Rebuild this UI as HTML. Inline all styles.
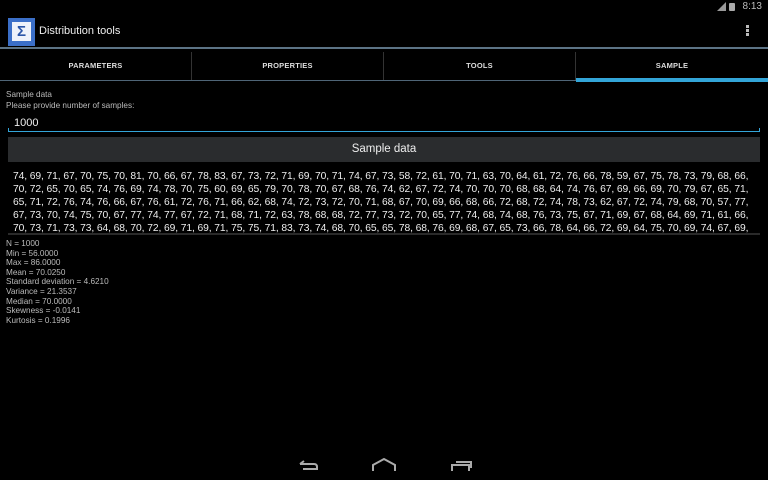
<!DOCTYPE html>
<html><head><meta charset="utf-8"><style>
*{margin:0;padding:0;box-sizing:border-box}
body{width:768px;height:480px;background:#000;color:#fff;font-family:"Liberation Sans",sans-serif;position:relative;overflow:hidden}
.abs{position:absolute}
.tab{position:absolute;top:49px;height:32px;font-size:7.5px;font-weight:bold;color:#ddd;text-align:center;line-height:33px;letter-spacing:.2px}
.data{left:13px;top:170px;font-size:10.3px;line-height:13px;white-space:nowrap;color:#eee;letter-spacing:-0.1px}
.stats{left:6px;top:239px;font-size:8.2px;line-height:9.6px;color:#bbb}
</style></head><body>
<div class="abs" style="right:6px;top:1px;font-size:10px;color:#bbb">8:13</div>
<div class="abs" style="right:33px;top:3px;width:6px;height:8px;background:#aaa;border-radius:1px"></div>
<div class="abs" style="right:42px;top:2px;width:0;height:0;border-left:9px solid transparent;border-bottom:9px solid #999"></div>
<div class="abs" style="left:8px;top:18px;width:27px;height:28px;background:#3b6fc8"></div>
<div class="abs" style="left:12px;top:22px;width:19px;height:19px;background:#eef2fa;color:#2b56a8;font-size:15px;font-weight:bold;text-align:center;line-height:19px">Σ</div>
<div class="abs" style="left:39px;top:25px;font-size:11px;color:#eee">Distribution tools</div>
<div class="abs" style="left:746px;top:25px;width:3px;height:3px;background:#bbb;box-shadow:0 4px 0 #bbb,0 8px 0 #bbb"></div>
<div class="abs" style="left:0;top:47px;width:768px;height:2px;background:#5c7385"></div>
<div class="tab" style="left:0;width:191px">PARAMETERS</div>
<div class="tab" style="left:192px;width:191px">PROPERTIES</div>
<div class="tab" style="left:384px;width:191px">TOOLS</div>
<div class="tab" style="left:576px;width:192px">SAMPLE</div>
<div class="abs" style="left:191px;top:52px;width:1px;height:28px;background:#333"></div>
<div class="abs" style="left:383px;top:52px;width:1px;height:28px;background:#333"></div>
<div class="abs" style="left:575px;top:52px;width:1px;height:28px;background:#333"></div>
<div class="abs" style="left:0;top:80px;width:576px;height:1px;background:#4f6577"></div>
<div class="abs" style="left:576px;top:78px;width:192px;height:4px;background:#33a5d8"></div>
<div class="abs" style="left:6px;top:90px;font-size:8.2px;color:#bbb">Sample data</div>
<div class="abs" style="left:6px;top:101px;font-size:8.2px;color:#bbb">Please provide number of samples:</div>
<div class="abs" style="left:14px;top:117px;font-size:11px;color:#eee">1000</div>
<div class="abs" style="left:8px;top:131px;width:752px;height:1px;background:#33a5d8"></div>
<div class="abs" style="left:8px;top:128px;width:1px;height:4px;background:#33a5d8"></div>
<div class="abs" style="left:759px;top:128px;width:1px;height:4px;background:#33a5d8"></div>
<div class="abs" style="left:8px;top:137px;width:752px;height:25px;background:#2a2c2e;color:#eee;font-size:11.5px;text-align:center;line-height:25px">Sample data</div>
<div class="abs" style="left:8px;top:233px;width:752px;height:2px;background:#2a2a2a"></div>
<div class="abs data">74, 69, 71, 67, 70, 75, 70, 81, 70, 66, 67, 78, 83, 67, 73, 72, 71, 69, 70, 71, 74, 67, 73, 58, 72, 61, 70, 71, 63, 70, 64, 61, 72, 76, 66, 78, 59, 67, 75, 78, 73, 79, 68, 66,<br>70, 72, 65, 70, 65, 74, 76, 69, 74, 78, 70, 75, 60, 69, 65, 79, 70, 78, 70, 67, 68, 76, 74, 62, 67, 72, 74, 70, 70, 70, 68, 68, 64, 74, 76, 67, 69, 66, 69, 70, 79, 67, 65, 71,<br>65, 71, 72, 76, 74, 76, 66, 67, 76, 61, 72, 76, 71, 66, 62, 68, 74, 72, 73, 72, 70, 71, 68, 67, 70, 69, 66, 68, 66, 72, 68, 72, 74, 78, 73, 62, 67, 72, 74, 79, 68, 70, 57, 77,<br>67, 73, 70, 74, 75, 70, 67, 77, 74, 77, 67, 72, 71, 68, 71, 72, 63, 78, 68, 68, 72, 77, 73, 72, 70, 65, 77, 74, 68, 74, 68, 76, 73, 75, 67, 71, 69, 67, 68, 64, 69, 71, 61, 66,<br>70, 73, 71, 73, 73, 64, 68, 70, 72, 69, 71, 69, 71, 75, 75, 71, 83, 73, 74, 68, 70, 65, 65, 78, 68, 76, 69, 68, 67, 65, 73, 66, 78, 64, 66, 72, 69, 64, 75, 70, 69, 74, 67, 69,</div>
<div class="abs stats">N = 1000<br>Min = 56.0000<br>Max = 86.0000<br>Mean = 70.0250<br>Standard deviation = 4.6210<br>Variance = 21.3537<br>Median = 70.0000<br>Skewness = -0.0141<br>Kurtosis = 0.1996</div>
<svg class="abs" style="left:0;top:450px" width="768" height="30">
<g fill="none" stroke="#aaa" stroke-width="2">
<path d="M300 14 H314 Q317 14 317 17 V19 H303 M300 14 l4 -3"/>
<path d="M373 21 V15 L384 9 L395 15 V21"/>
<path d="M452 21 V15 H469 V21 M456 12 H471 V18"/>
</g></svg>
</body></html>
